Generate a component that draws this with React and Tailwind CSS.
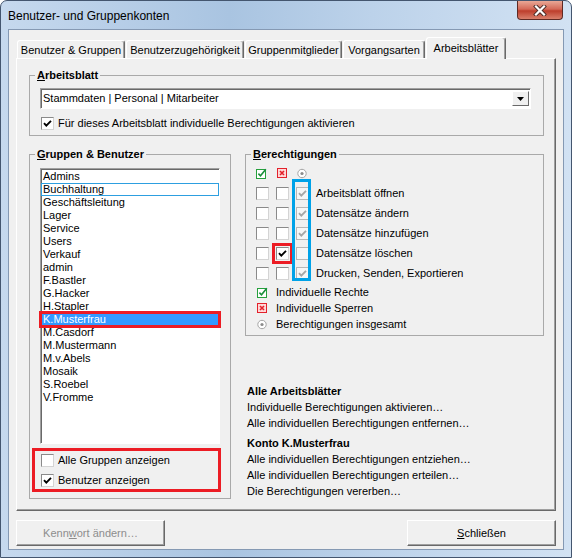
import React from "react";

const members = [
  "Admins",
  "Buchhaltung",
  "Geschäftsleitung",
  "Lager",
  "Service",
  "Users",
  "Verkauf",
  "admin",
  "F.Bastler",
  "G.Hacker",
  "H.Stapler",
  "K.Musterfrau",
  "M.Casdorf",
  "M.Mustermann",
  "M.v.Abels",
  "Mosaik",
  "S.Roebel",
  "V.Fromme",
];

const rights = [
  { label: "Arbeitsblatt öffnen", deny: false, total: true },
  { label: "Datensätze ändern", deny: false, total: true },
  { label: "Datensätze hinzufügen", deny: false, total: true },
  { label: "Datensätze löschen", deny: true, total: false },
  { label: "Drucken, Senden, Exportieren", deny: false, total: true },
];

const tabs = [
  { label: "Benutzer & Gruppen", w: "w-[108px]" },
  { label: "Benutzerzugehörigkeit", w: "w-[118px]" },
  { label: "Gruppenmitglieder", w: "w-[97px]" },
  { label: "Vorgangsarten", w: "w-[82px]" },
];

function Check({ color = "#000" }) {
  return (
    <svg width="9" height="9" viewBox="0 0 9 9">
      <path d="M1 4.2 L3.3 6.6 L8 1.8" fill="none" stroke={color} strokeWidth="1.9" />
    </svg>
  );
}

function Box({ checked, muted, className = "" }) {
  return (
    <span
      className={
        "flex h-[13px] w-[13px] shrink-0 items-center justify-center border " +
        (muted
          ? "border-[#b7b7b7] bg-[#f6f6f6] "
          : "border-[#8a8a8a] border-b-[#d4d4d4] border-r-[#d4d4d4] bg-white ") +
        className
      }
    >
      {checked && <Check color={muted ? "#a6a6a6" : "#000"} />}
    </span>
  );
}

function AllowIcon() {
  return (
    <svg width="11" height="11" viewBox="0 0 11 11">
      <rect x="0.5" y="1.5" width="9" height="9" fill="#fff" stroke="#25a03c" />
      <path d="M2.4 5.6 L4.5 7.7 L9.8 1.2" fill="none" stroke="#1a8f3c" strokeWidth="1.6" />
    </svg>
  );
}

function DenyIcon() {
  return (
    <svg width="11" height="11" viewBox="0 0 11 11">
      <rect x="0.5" y="0.5" width="9" height="9" fill="#ffd8d8" stroke="#e3212b" />
      <path d="M3 3 L7 7 M7 3 L3 7" fill="none" stroke="#e3212b" strokeWidth="1.6" />
    </svg>
  );
}

function TotalIcon() {
  return (
    <svg width="11" height="11" viewBox="0 0 11 11">
      <circle cx="5" cy="5.5" r="4.2" fill="#fff" stroke="#a4a4a4" />
      <circle cx="5" cy="5.5" r="1.6" fill="#8c8c8c" />
    </svg>
  );
}

function Legend({ first, rest }) {
  return (
    <legend className="ml-[5px] px-[2px] text-[11px] font-bold leading-[14px]">
      <span className="underline">{first}</span>
      {rest}
    </legend>
  );
}

export default function App() {
  return (
    <div className="h-[558px] w-[572px] overflow-hidden font-['Liberation_Sans',Arial,sans-serif] text-[11px] leading-[13px] text-black">
      <div className="flex h-full flex-col rounded-t-[7px] border border-[#44566f] bg-[linear-gradient(90deg,#c6d9ee,#a9c4e1_40%,#bcd2ea_65%,#d2e2f3)]">
        {/* title bar */}
        <div className="flex h-[28px] shrink-0 items-start">
          <span className="mt-[8px] pl-[7px] text-[12px] leading-[14px]">Benutzer- und Gruppenkonten</span>
          <button className="ml-auto mr-[8px] flex h-[19px] w-[46px] items-center justify-center rounded-b-[4px] border border-t-0 border-[#5e2a24] bg-[linear-gradient(#e9a896,#d46a58_45%,#bd3e2c_55%,#d9806c)]">
            <svg width="14" height="11" viewBox="0 0 14 11">
              <path d="M3 1.5 L11 9.5 M11 1.5 L3 9.5" stroke="#4a2b27" strokeWidth="4" strokeLinecap="square" />
              <path d="M3 1.5 L11 9.5 M11 1.5 L3 9.5" stroke="#ffffff" strokeWidth="2.2" strokeLinecap="square" />
            </svg>
          </button>
        </div>

        {/* client area */}
        <div className="mx-[7px] mb-[7px] flex flex-1 flex-col border border-[#8599b3] bg-[#f0f0f0] pt-[7px]">
          {/* tabs */}
          <div className="ml-[8px] flex h-[21px] items-end gap-[1px]">
            {tabs.map((t) => (
              <div
                key={t.label}
                className={
                  t.w +
                  " flex h-[18px] items-center justify-center rounded-t-[3px] border border-b-0 border-l-white border-t-white border-r-[#696969] bg-[#f0f0f0] pt-[2px] shadow-[inset_-1px_0_0_#a0a0a0]"
                }
              >
                {t.label}
              </div>
            ))}
            <div className="relative z-10 -mb-px flex h-[22px] w-[80px] items-start justify-center rounded-t-[3px] border border-b-0 border-l-white border-t-white border-r-[#696969] bg-[#f0f0f0] pt-[4px] shadow-[inset_-1px_0_0_#a0a0a0]">
              Arbeitsblätter
            </div>
          </div>

          {/* tab panel */}
          <div className="ml-[7px] flex h-[453px] w-[540px] flex-col border border-b-[#696969] border-l-white border-r-[#696969] border-t-white pl-[12px] pt-[9px] shadow-[inset_-1px_-1px_0_#a0a0a0]">
            <fieldset className="w-[515px] border border-[#a9a9a9] pb-[2px]">
              <Legend first="A" rest="rbeitsblatt" />
              <div className="ml-[10px] mt-[6px] flex h-[21px] w-[491px] items-center justify-between border border-[#a0a0a0] border-b-white border-r-white bg-white pl-[2px] pr-[1px] shadow-[inset_1px_1px_0_#696969]">
                <span>Stammdaten | Personal | Mitarbeiter</span>
                <span className="flex h-[15px] w-[17px] items-center justify-center border border-b-[#696969] border-l-white border-r-[#696969] border-t-white bg-[#f0f0f0]">
                  <svg width="7" height="4" viewBox="0 0 7 4">
                    <path d="M0 0 H7 L3.5 4 Z" fill="#000" />
                  </svg>
                </span>
              </div>
              <div className="ml-[11px] mt-[4px] flex h-[20px] items-center gap-[4px]">
                <Box checked />
                <span>Für dieses Arbeitsblatt individuelle Berechtigungen aktivieren</span>
              </div>
            </fieldset>

            <div className="mt-[11px] flex">
              {/* groups & users */}
              <fieldset className="w-[202px] border border-[#a9a9a9] pb-[2px]">
                <Legend first="G" rest="ruppen & Benutzer" />
                <div className="ml-[10px] mt-[7px] h-[276px] w-[180px] border border-[#a0a0a0] border-b-white border-r-white bg-white pt-[1px] shadow-[inset_1px_1px_0_#696969]">
                  {members.map((m) => (
                    <div
                      key={m}
                      className={
                        "h-[13px] pl-[2px] leading-[13px] " +
                        (m === "Buchhaltung"
                          ? "outline outline-1 -outline-offset-1 outline-[#2d9fe0] "
                          : "") +
                        (m === "K.Musterfrau"
                          ? "bg-[#3399ff] text-white outline-[3px] outline-solid -outline-offset-1 outline-[#ec1c24]"
                          : "")
                      }
                    >
                      {m}
                    </div>
                  ))}
                </div>
                <div className="ml-[2px] mt-[4px] flex w-[189px] flex-col gap-[2px] border-[3px] border-[#ec1c24] pl-[6px]">
                  <div className="flex h-[18px] items-center gap-[4px]">
                    <Box />
                    <span>Alle Gruppen anzeigen</span>
                  </div>
                  <div className="flex h-[18px] items-center gap-[4px]">
                    <Box checked />
                    <span>Benutzer anzeigen</span>
                  </div>
                </div>
              </fieldset>

              {/* permissions + actions */}
              <div className="ml-[14px] flex flex-col">
                <fieldset className="w-[299px] border border-[#a9a9a9] pb-[3px]">
                  <Legend first="B" rest="erechtigungen" />
                  <div className="pl-[10px]">
                    <div className="mt-[6px] flex h-[12px] items-center gap-[7px]">
                      <span className="w-[13px]"><AllowIcon /></span>
                      <span className="w-[13px] pl-[1px]"><DenyIcon /></span>
                      <span className="w-[13px] pl-[1px]"><TotalIcon /></span>
                    </div>
                    <div className="relative mt-[4px]">
                      {rights.map((r) => (
                        <div key={r.label} className="flex h-[20px] items-center gap-[7px]">
                          <Box />
                          <Box
                            checked={r.deny}
                            className={r.deny ? "outline-[3px] outline-solid outline-offset-1 outline-[#ec1c24]" : ""}
                          />
                          <Box muted checked={r.total} />
                          <span>{r.label}</span>
                        </div>
                      ))}
                      <div className="absolute left-[36px] top-[-4px] h-[102px] w-[19px] border-[3px] border-[#00a2e8]" />
                    </div>
                    <div className="mt-[1px] flex h-[16px] items-center">
                      <span className="w-[20px] pl-[1px]"><AllowIcon /></span>
                      <span>Individuelle Rechte</span>
                    </div>
                    <div className="flex h-[16px] items-center">
                      <span className="w-[20px] pl-[1px]"><DenyIcon /></span>
                      <span>Individuelle Sperren</span>
                    </div>
                    <div className="flex h-[16px] items-center">
                      <span className="w-[20px] pl-[1px]"><TotalIcon /></span>
                      <span>Berechtigungen insgesamt</span>
                    </div>
                  </div>
                </fieldset>

                <div className="mt-[47px] pl-[2px] leading-[16px]">
                  <div className="font-bold">Alle Arbeitsblätter</div>
                  <div>Individuelle Berechtigungen aktivieren…</div>
                  <div>Alle individuellen Berechtigungen entfernen…</div>
                  <div className="mt-[4px] font-bold">Konto K.Musterfrau</div>
                  <div>Alle individuellen Berechtigungen entziehen…</div>
                  <div>Alle individuellen Berechtigungen erteilen…</div>
                  <div>Die Berechtigungen vererben…</div>
                </div>
              </div>
            </div>
          </div>

          {/* buttons */}
          <div className="ml-[7px] mt-[9px] flex w-[540px] justify-between">
            <button className="h-[26px] w-[149px] border border-b-[#696969] border-l-white border-r-[#696969] border-t-white bg-[#f0f0f0] text-[#8d8d8d] shadow-[inset_-1px_-1px_0_#a0a0a0]">
              Kenn<span className="underline">w</span>ort ändern…
            </button>
            <button className="h-[26px] w-[149px] border border-b-[#696969] border-l-white border-r-[#696969] border-t-white bg-[#f0f0f0] shadow-[inset_-1px_-1px_0_#a0a0a0]">
              <span className="underline">S</span>chließen
            </button>
          </div>
        </div>
      </div>
    </div>
  );
}
